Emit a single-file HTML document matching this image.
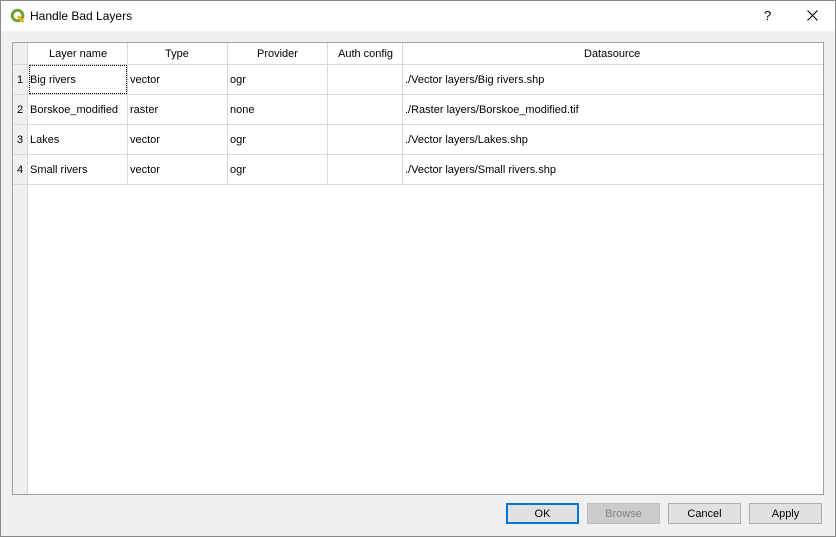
<!DOCTYPE html><html><head><style>
body{margin:0;width:836px;height:537px;position:relative;overflow:hidden;background:#f0f0f0;font-family:"Liberation Sans",sans-serif;font-size:11px;color:#000}
.win{position:absolute;left:0;top:0;width:834px;height:535px;border:1px solid #888}
.title{position:absolute;left:0;top:0;width:834px;height:30px;background:#fff}
.t{position:absolute;white-space:nowrap}
.tbl{position:absolute;left:11px;top:41px;width:810px;height:451px;border:1px solid #a0a0a0;background:#fff}
.hl{position:absolute;background:#d8d8d8}
.btn{position:absolute;top:502px;width:71px;height:19px;border:1px solid #adadad;background:#e1e1e1;text-align:center;line-height:21px}
</style></head><body><div class="win">
<div class="title">
<svg style="position:absolute;left:9px;top:7px" width="16" height="16" viewBox="0 0 16 16"><circle cx="7.5" cy="7.5" r="5.3" fill="none" stroke="#6fa33a" stroke-width="3"/><path d="M8 8 L13.5 14" stroke="#e8b400" stroke-width="3"/></svg>
<div class="t" style="left:29px;top:8px;font-size:12px">Handle Bad Layers</div>
<div class="t" style="left:763px;top:7px;font-size:13px">?</div>
<svg style="position:absolute;left:806px;top:9px" width="11" height="11"><path d="M0.5 0.5L10.5 10.5M10.5 0.5L0.5 10.5" stroke="#000" stroke-width="1.1"/></svg>
</div>
<div class="tbl">
<div style="position:absolute;left:0;top:0;width:14px;height:451px;background:#f0f0f0"></div>
<div class="hl" style="left:14px;top:0;width:1px;height:451px"></div>
<div class="hl" style="left:0;top:21px;width:810px;height:1px"></div>
<div class="hl" style="left:0;top:51px;width:810px;height:1px"></div>
<div class="hl" style="left:0;top:81px;width:810px;height:1px"></div>
<div class="hl" style="left:0;top:111px;width:810px;height:1px"></div>
<div class="hl" style="left:0;top:141px;width:810px;height:1px"></div>
<div class="hl" style="left:114px;top:0;width:1px;height:141px"></div>
<div class="hl" style="left:214px;top:0;width:1px;height:141px"></div>
<div class="hl" style="left:314px;top:0;width:1px;height:141px"></div>
<div class="hl" style="left:389px;top:0;width:1px;height:141px"></div>
<div style="position:absolute;left:16px;top:22px;width:96px;height:27px;border:1px dotted #000"></div>
<div class="t" style="left:36px;top:5px">Layer name</div>
<div class="t" style="left:152px;top:5px">Type</div>
<div class="t" style="left:244px;top:5px">Provider</div>
<div class="t" style="left:325px;top:5px">Auth config</div>
<div class="t" style="left:571px;top:5px">Datasource</div>
<div class="t" style="left:4px;top:31px">1</div><div class="t" style="left:17px;top:31px">Big rivers</div><div class="t" style="left:117px;top:31px">vector</div><div class="t" style="left:217px;top:31px">ogr</div><div class="t" style="left:392px;top:31px">./Vector layers/Big rivers.shp</div>
<div class="t" style="left:4px;top:61px">2</div><div class="t" style="left:17px;top:61px">Borskoe_modified</div><div class="t" style="left:117px;top:61px">raster</div><div class="t" style="left:217px;top:61px">none</div><div class="t" style="left:392px;top:61px">./Raster layers/Borskoe_modified.tif</div>
<div class="t" style="left:4px;top:91px">3</div><div class="t" style="left:17px;top:91px">Lakes</div><div class="t" style="left:117px;top:91px">vector</div><div class="t" style="left:217px;top:91px">ogr</div><div class="t" style="left:392px;top:91px">./Vector layers/Lakes.shp</div>
<div class="t" style="left:4px;top:121px">4</div><div class="t" style="left:17px;top:121px">Small rivers</div><div class="t" style="left:117px;top:121px">vector</div><div class="t" style="left:217px;top:121px">ogr</div><div class="t" style="left:392px;top:121px">./Vector layers/Small rivers.shp</div>
</div>
<div class="btn" style="left:505px;border:2px solid #0078d7;width:69px;height:17px;line-height:19px">OK</div>
<div class="btn" style="left:586px;background:#ccc;border-color:#bfbfbf;color:#838383">Browse</div>
<div class="btn" style="left:667px">Cancel</div>
<div class="btn" style="left:748px">Apply</div>
</div></body></html>
